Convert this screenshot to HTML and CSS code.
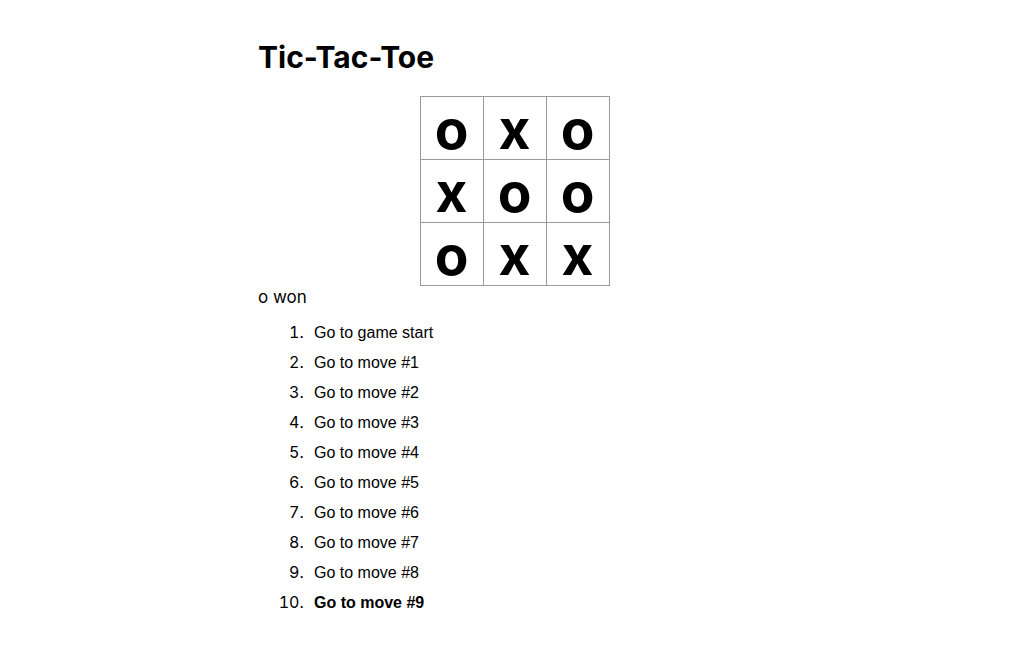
FILE: index.html
```html
<!DOCTYPE html>
<html lang="en">
<head>
<meta charset="utf-8">
<title>Tic-Tac-Toe</title>
<link rel="stylesheet" href="styles.css">
</head>
<body>
<main class="app">
  <h1 class="title">Tic-Tac-Toe</h1>
  <div class="board">
    <button class="square">o</button><button class="square">x</button><button class="square">o</button>
    <button class="square">x</button><button class="square">o</button><button class="square">o</button>
    <button class="square">o</button><button class="square">x</button><button class="square">x</button>
  </div>
  <p class="status">o won</p>
  <ol class="moves">
    <li><button class="move">Go to game start</button></li>
    <li><button class="move">Go to move #1</button></li>
    <li><button class="move">Go to move #2</button></li>
    <li><button class="move">Go to move #3</button></li>
    <li><button class="move">Go to move #4</button></li>
    <li><button class="move">Go to move #5</button></li>
    <li><button class="move">Go to move #6</button></li>
    <li><button class="move">Go to move #7</button></li>
    <li><button class="move">Go to move #8</button></li>
    <li><button class="move current">Go to move #9</button></li>
  </ol>
</main>
</body>
</html>
```
FILE: styles.css
```css
* {
  box-sizing: border-box;
}

body {
  margin: 0;
  background: #fff;
  color: #000;
  font: 17px/22px Inter, sans-serif;
}

.app {
  width: 50%;
  margin: 0 auto;
  padding: 36px 0 0 1px;
}

.title {
  margin: 0 0 18px;
  font-size: 30px;
  line-height: 42px;
  font-weight: 700;
}

.board {
  display: grid;
  grid-template-columns: repeat(3, 63px);
  grid-auto-rows: 63px;
  width: max-content;
  margin: 0 auto;
  border: solid #999;
  border-width: 1px 0 0 1px;
}

.square {
  padding: 2px 0 0;
  border: solid #999;
  border-width: 0 1px 1px 0;
  background: #fff;
  color: #000;
  font: 700 55px/58px Inter, sans-serif;
}

.status {
  margin: 0;
}

.moves {
  margin: 9px 0 0;
  padding-left: 50px;
  font-size: 16px;
  line-height: 30px;
}

.move {
  padding: 0 6px;
  border: 0;
  background: none;
  color: #000;
  font: 16px/24px "Liberation Sans", Arial, sans-serif;
}

.current {
  font-weight: 700;
}
```
